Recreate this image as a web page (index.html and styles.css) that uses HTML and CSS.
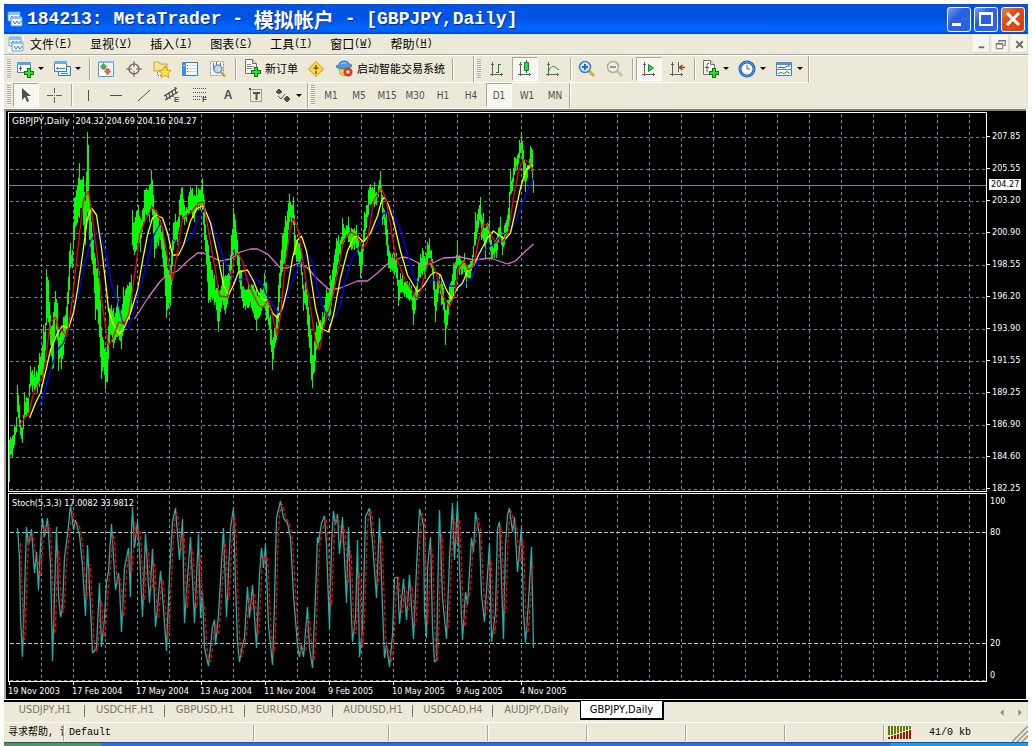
FILE: index.html
```html
<!DOCTYPE html>
<html lang="zh-CN">
<head>
<meta charset="utf-8">
<title>184213: MetaTrader</title>
<link rel="stylesheet" href="styles.css">
</head>
<body>
<svg class="defs" aria-hidden="true">
  <defs>
    <symbol id="plus" viewBox="0 0 10 10"><path d="M3 0h4v3h3v4H7v3H3V7H0V3h3z" fill="#0a7a0a"/><path d="M4 1h2v3h3v2H6v3H4V6H1V4h3z" fill="#2ee02e"/></symbol>
    <symbol id="app" viewBox="0 0 16 16"><path d="M1 1h12v9H1z" fill="#fff" stroke="#5a9ae0"/><path d="M1 1h12v3H1z" fill="#8cc0f4"/><path d="M3 8l2-3 2 3 2-3" fill="none" stroke="#4a86d8"/><path d="M4 6h11v9H4z" fill="#fff" stroke="#5a9ae0"/><path d="M4 6h11v2H4z" fill="#8cc0f4"/><path d="M6 10l2 3 2-3 2 3 2-3" fill="none" stroke="#3a76d0"/></symbol>
    <symbol id="page" viewBox="0 0 12 15"><path d="M.5.5h7l4 4v10H.5z" fill="#fff" stroke="#707070"/><path d="M7.500.5v4h4" fill="#ddd" stroke="#707070"/></symbol>
    <symbol id="axes" viewBox="0 0 18 18"><path d="M4.500 2v14M2 14.500h13M3 4.500h3M13.500 13v3" stroke="#606060" fill="none"/></symbol>
  </defs>
</svg>
<div class="window">
  <header class="title">
    <svg class="logo"><use href="#app"/></svg>
    <h1>184213: MetaTrader - <span class="cjk">模拟帐户</span> - [GBPJPY,Daily]</h1>
    <div class="caption">
      <button aria-label="Minimize"><svg viewBox="0 0 22 22"><path d="M4 15h9v3H4z" fill="#fff"/></svg></button>
      <button aria-label="Maximize"><svg viewBox="0 0 22 22"><path d="M5 5h12v12H5zM4 6h14" fill="none" stroke="#fff" stroke-width="2"/></svg></button>
      <button class="close" aria-label="Close"><svg viewBox="0 0 22 22"><path d="M5 5l12 12M17 5L5 17" stroke="#fff" stroke-width="3"/></svg></button>
    </div>
  </header>

  <nav class="menu">
    <svg class="logo"><use href="#app"/></svg>
    <button>文件<span>(<u>F</u>)</span></button><button>显视<span>(<u>V</u>)</span></button><button>插入<span>(<u>I</u>)</span></button><button>图表<span>(<u>C</u>)</span></button><button>工具<span>(<u>T</u>)</span></button><button>窗口<span>(<u>W</u>)</span></button><button>帮助<span>(<u>H</u>)</span></button>
    <div class="mdi">
      <button aria-label="Minimize chart"><svg viewBox="0 0 16 16"><path d="M5 10h6v2H5z" fill="#6b6a60"/></svg></button>
      <button aria-label="Restore chart"><svg viewBox="0 0 16 16"><path d="M6 6V4h7v5h-2M3.500 7.500h7v5h-7zM3 7h8M6 4h8" fill="none" stroke="#6b6a60"/></svg></button>
      <button aria-label="Close chart"><svg viewBox="0 0 16 16"><path d="M4.500 4.500l7 7M11.500 4.500l-7 7" stroke="#6b6a60" stroke-width="2"/></svg></button>
    </div>
  </nav>

  <div class="bars">
    <div class="bar">
      <div class="band">
        <i class="grip"></i>
        <button class="drop" aria-label="New chart"><svg viewBox="0 0 18 18"><path d="M1.500 2.500h13v10h-13z" fill="#fff" stroke="#3d86c8"/><path d="M1 2h14v3H1z" fill="#5aa4e0"/><path d="M4.500 6v5M3 8.500h3" stroke="#555"/><use href="#plus" x="8" y="8" width="10" height="10"/></svg></button>
        <button class="drop" aria-label="Profiles"><svg viewBox="0 0 18 18"><path d="M5.500 6.500h12v9h-12z" fill="#e8f2fb" stroke="#3d7ab8"/><path d="M1.500 1.500h12v10h-12z" fill="#fff" stroke="#3d7ab8"/><path d="M1 1h13v3H1z" fill="#6aaee6"/><path d="M3 8.500h9M4.500 7v3M8 13.500h7" stroke="#4a8ac4"/></svg></button>
        <i class="sep"></i>
        <button aria-label="Market Watch"><svg viewBox="0 0 18 18"><path d="M1.500 1.500h15v15h-15z" fill="#fff" stroke="#4f9be0"/><path d="M1 1h16v2H1z" fill="#7cc0f0"/><path d="M9 6h6M9 9h6M9 12h6M9 15h6" stroke="#d5d5d5"/><path d="M6.500 3.500l3 3.500H8v2H5V7H3.500z" fill="#3fc03f" stroke="#158015" stroke-width=".7"/><path d="M10.500 14.500l-3-3.500H9V9h3v2h1.500z" fill="#f07040" stroke="#b03010" stroke-width=".7"/></svg></button>
        <button aria-label="Data Window"><svg viewBox="0 0 18 18"><circle cx="9" cy="9" r="5" fill="none" stroke="#707070" stroke-width="1.500"/><path d="M9 1v6M9 11v6M1 9h6M11 9h6" stroke="#606060"/></svg></button>
        <button aria-label="Navigator"><svg viewBox="0 0 18 18"><path d="M1 2h5l1 2h7v7H1z" fill="#fbe48a" stroke="#c9a03a"/><path d="M4.500 12v4M5 15.500h3" stroke="#777" stroke-dasharray="1 1"/><path d="M12 6l2 4 4 .5-3 3 .7 4L12 15.500 8.300 17.500 9 13.500l-3-3 4-.5z" fill="#ffe83a" stroke="#c08a10" stroke-width=".8"/></svg></button>
        <button aria-label="Terminal"><svg viewBox="0 0 18 18"><path d="M1.500 2.500h15v13h-15z" fill="#fff" stroke="#2f7fd0"/><path d="M1 2h4v14H1z" fill="#3f8fe0"/><path d="M6 5.500h1M6 8.500h1M6 11.500h1" stroke="#e02020"/><path d="M8 5.500h8M8 8.500h8M8 11.500h8" stroke="#c6d8ee"/><path d="M2 5.500h2" stroke="#fff"/></svg></button>
        <button aria-label="Strategy Tester"><svg viewBox="0 0 18 18"><path d="M1.500 1.500h13v14h-13z" fill="#f4f4ee" stroke="#999" stroke-dasharray="2 1"/><path d="M4.500 3v7M7.500 2v5M11.500 3v4" stroke="#4a78b0"/><circle cx="9" cy="9" r="4" fill="#bcdcf8" stroke="#6a96c4" stroke-width="1.500"/><path d="M12 12l4 4.500" stroke="#d0a030" stroke-width="2.500"/></svg></button>
        <i class="sep"></i>
        <button class="text"><svg viewBox="0 0 18 18"><use href="#page" x="2" y="0" width="12" height="15"/><path d="M4 5.500h4M4 7.500h7M4 9.500h5" stroke="#888"/><use href="#plus" x="8" y="8" width="10" height="10"/></svg>新订单</button>
        <button aria-label="MetaEditor"><svg viewBox="0 0 18 18"><path d="M9 1.500L16.500 9 9 16.500 1.500 9z" fill="#ffd84a" stroke="#c09020"/><path d="M9 5v5M6.500 8h5M9 11v3" stroke="#7a5a10" stroke-width="1.500"/></svg></button>
        <button class="text"><svg viewBox="0 0 18 18"><path d="M4 8h10l-1 6-4 3-4-2z" fill="#f2cc54" stroke="#b89030" stroke-width=".8"/><path d="M1 8q0-2 3-2 0-4 5-4t5 3q3 0 3 2-3 3-8 3T1 8z" fill="#4a9ce0" stroke="#2a6cab" stroke-width=".8"/><path d="M6 5q2-2 5-1" stroke="#b8dcf8" fill="none"/><circle cx="13" cy="13" r="4.500" fill="#d83820"/><path d="M11.500 11.500h3v3h-3z" fill="#fff"/></svg>启动智能交易系统</button>
        <i class="sep"></i>
      </div>
      <div class="band">
        <i class="grip"></i>
        <button aria-label="Bar chart"><svg viewBox="0 0 18 18"><use href="#axes"/><path d="M10.500 4v9M10 4.500h3M8 12.500h2" stroke="#0a8a30"/></svg></button>
        <button class="on" aria-label="Candlesticks"><svg viewBox="0 0 18 18"><use href="#axes"/><path d="M10.500 0v13" stroke="#0a8a30"/><path d="M8.500 2.500h4v8h-4z" fill="#2ed84a" stroke="#0a8a30"/></svg></button>
        <button aria-label="Line chart"><svg viewBox="0 0 18 18"><use href="#axes"/><path d="M4 12q4-8 7-5l4 3" stroke="#1a9a40" fill="none"/></svg></button>
        <i class="sep"></i>
        <button aria-label="Zoom in"><svg viewBox="0 0 18 18"><path d="M11 11l5 5" stroke="#d8aa30" stroke-width="3"/><circle cx="7" cy="7" r="5.500" fill="#cfe8fb" stroke="#3a84c8" stroke-width="1.500"/><path d="M7 4v6M4 7h6" stroke="#2a70b0" stroke-width="2"/></svg></button>
        <button aria-label="Zoom out"><svg viewBox="0 0 18 18"><path d="M11 11l5 5" stroke="#c4c1b4" stroke-width="3"/><circle cx="7" cy="7" r="5.500" fill="#f0efe8" stroke="#aeaba0" stroke-width="1.500"/><path d="M4 7h6" stroke="#9a988e" stroke-width="2"/></svg></button>
        <i class="sep"></i>
        <button class="on" aria-label="Auto scroll"><svg viewBox="0 0 18 18"><use href="#axes"/><path d="M8.500 4.500l5 3.500-5 3.500z" fill="#2ed84a" stroke="#0a8a30"/></svg></button>
        <button aria-label="Chart shift"><svg viewBox="0 0 18 18"><use href="#axes"/><path d="M10.500 2v10" stroke="#2a78a8"/><path d="M11 7.500h6M14.500 5l-3 2.500 3 2.500" stroke="#b03a10" fill="none" stroke-width="1.500"/></svg></button>
        <i class="sep"></i>
        <button class="drop" aria-label="Indicators"><svg viewBox="0 0 18 18"><use href="#page" x="2" y="0" width="12" height="15"/><path d="M8 3.500q-2-1-2 2v7M4 7.500h4" stroke="#555" fill="none"/><use href="#plus" x="8" y="8" width="10" height="10"/></svg></button>
        <button class="drop" aria-label="Periods"><svg viewBox="0 0 18 18"><circle cx="9" cy="9" r="7" fill="#fff" stroke="#1f5fb0" stroke-width="3"/><circle cx="9" cy="9" r="7" fill="none" stroke="#5aa8f0"/><path d="M9 5v4h3" stroke="#555" fill="none"/></svg></button>
        <button class="drop" aria-label="Templates"><svg viewBox="0 0 18 18"><path d="M1.500 2.500h15v13h-15z" fill="#fff" stroke="#3a80c8"/><path d="M1 2h16v3H1zM1 9h16v1H1z" fill="#4a94dc"/><path d="M3 8l3-1 3 1 3-2h3" stroke="#a03018" fill="none"/><path d="M3 13.500l3-1 3 1 3-2 3 2" stroke="#2a9a30" fill="none"/></svg></button>
      </div>
    </div>
    <div class="bar">
      <div class="band">
        <i class="grip"></i>
        <button class="on" aria-label="Cursor"><svg viewBox="0 0 18 18"><path d="M5 2v12l3-3 2 5 2-1-2-5h4z" fill="#505050"/></svg></button>
        <button aria-label="Crosshair"><svg viewBox="0 0 18 18"><path d="M9.500 2v5M9.500 11v6M2 9.500h6M11 9.500h6M9 9.500h1" stroke="#606060"/></svg></button>
        <i class="sep"></i>
        <button aria-label="Vertical line"><svg viewBox="0 0 18 18"><path d="M9.500 4v11" stroke="#505050"/></svg></button>
        <button aria-label="Horizontal line"><svg viewBox="0 0 18 18"><path d="M3 9.500h12" stroke="#505050"/></svg></button>
        <button aria-label="Trendline"><svg viewBox="0 0 18 18"><path d="M3 15L15 4" stroke="#505050"/></svg></button>
        <button aria-label="Equidistant channel"><svg viewBox="0 0 18 18"><path d="M1 10L14 2M2 14l13-8M3 8l1 6M6 6l1 7M9 4l1 7M12 1l1 7" stroke="#505050" stroke-width="1.300"/><text x="11" y="16" class="glyph">E</text></svg></button>
        <button aria-label="Fibonacci"><svg viewBox="0 0 18 18"><path d="M2 2.500h13M2 6.500h13M2 10.500h13M2 13.500h8" stroke="#505050" stroke-dasharray="1 1"/><text x="11" y="16" class="glyph">F</text></svg></button>
        <button class="letter">A</button>
        <button aria-label="Text label"><svg viewBox="0 0 18 18"><path d="M3.500 3.500h11v12h-11z" fill="none" stroke="#505050" stroke-dasharray="1 1"/><path d="M2 2h2v2H2zM6 6h7v2H6zM8.500 8h2v6h-2z" fill="#505050"/></svg></button>
        <button class="drop" aria-label="Arrows"><svg viewBox="0 0 18 18"><path d="M5 3l3 3-3 2-3-2zM13 10l3 3-3 3-3-3z" fill="#505050" stroke="#505050"/><path d="M4 10l3 3 4-5" fill="none" stroke="#505050"/></svg></button>
      </div>
      <div class="band">
        <i class="grip"></i>
        <button>M1</button><button>M5</button><button>M15</button><button>M30</button><button>H1</button><button>H4</button><button class="on">D1</button><button>W1</button><button>MN</button>
      </div>
    </div>
  </div>

  <main class="chart">
    <section class="panel main">
      <div class="plot">
        <svg class="canvas" id="price"></svg>
        <p class="legend"><span>GBPJPY,Daily</span>204.32 204.69 204.16 204.27</p>
      </div>
      <div class="scale">
        <span>207.85</span><span>205.55</span><span>203.20</span><span>200.90</span><span>198.55</span><span>196.20</span><span>193.90</span><span>191.55</span><span>189.25</span><span>186.90</span><span>184.60</span><span>182.25</span>
        <b class="quote">204.27</b>
      </div>
    </section>
    <section class="panel stoch">
      <div class="plot">
        <svg class="canvas" id="stoch"></svg>
        <p class="legend">Stoch(5,3,3) 17.0082 33.9812</p>
      </div>
      <div class="levels"><span>100</span><span>80</span><span>20</span><span>0</span></div>
    </section>
    <div class="dates"><span>19 Nov 2003</span><span>17 Feb 2004</span><span>17 May 2004</span><span>13 Aug 2004</span><span>11 Nov 2004</span><span>9 Feb 2005</span><span>10 May 2005</span><span>9 Aug 2005</span><span>4 Nov 2005</span></div>
  </main>

  <nav class="tabs">
    <button>USDJPY,H1</button><button>USDCHF,H1</button><button>GBPUSD,H1</button><button class="wide">EURUSD,M30</button><button>AUDUSD,H1</button><button>USDCAD,H4</button><button class="wide last">AUDJPY,Daily</button><button class="active">GBPJPY,Daily</button>
    <div class="arrows">
      <button aria-label="Scroll left"><svg viewBox="0 0 8 8"><path d="M5 1v6L2 4z" fill="#8c8a80"/></svg></button>
      <button aria-label="Scroll right"><svg viewBox="0 0 8 8"><path d="M3 1v6l3-3z" fill="#8c8a80"/></svg></button>
    </div>
  </nav>

  <footer class="status">
    <span class="help">寻求帮助, 请</span>
    <span class="profile">Default</span>
    <span class="first"></span><span></span><span></span><span></span><span></span><span></span>
    <span class="traffic">
      <svg viewBox="0 0 24 13"><path d="M1 0v9M4 0v9M7 0v8M10 0v7M13 0v6M16 0v5M19 0v4M22 0v3" stroke="#5c8000" stroke-width="2"/><path d="M1 11v2M4 10v3M7 9v4M10 8v5M13 7v6M16 6v7M19 5v8M22 4v9" stroke="#9c1800" stroke-width="2"/></svg>
      41/0 kb
    </span>
    <svg class="sizer" viewBox="0 0 16 16"><path d="M0 16L16 0M5 16L16 5M10 16l6-6" stroke="#aca899" stroke-width="2"/><path d="M2 16L16 2M7 16L16 7M12 16l4-4" stroke="#fff"/></svg>
  </footer>
  <div class="taskbar"><i class="start"></i><i class="tray"></i></div>
</div>
<script src="chart.js"></script>
</body>
</html>
```
FILE: styles.css
```css
* { box-sizing: border-box; }
body { margin: 0; background: #fff; font-family: "DejaVu Sans Condensed", "DejaVu Sans", "Noto Sans CJK SC", sans-serif; font-size: 9px; color: #000; }
button { margin: 0; padding: 0; border: 0; background: none; font: inherit; color: inherit; }
p, h1 { margin: 0; }
.defs { position: absolute; width: 0; height: 0; }

.window { display: flex; flex-direction: column; height: 100vh; padding: 4px 4px 0; }

.title { display: flex; align-items: center; flex: none; height: 30px; padding: 0 3px; gap: 4px; background: linear-gradient(#0a50d8, #0054e4 15%, #0054e4 50%, #0066ff 80%, #0062f4 92%, #003cc8); }
.title .logo { width: 16px; height: 16px; }
.title h1 { display: flex; flex: 1; font: bold 18px/28px "Liberation Mono", monospace; color: #fff; text-shadow: 1px 1px #0a2a80; white-space: pre; }
.title .cjk { font: bold 20px/29px "Noto Sans CJK SC", sans-serif; }
.caption { display: flex; gap: 3px; }
.caption button { width: 24px; height: 25px; border: 1px solid #fff; border-radius: 3px; background: linear-gradient(135deg, #7a9cf0, #2a5ee0 40%, #2a66f0); }
.caption .close { background: linear-gradient(135deg, #d8863c, #dc4c18 40%, #d84010); }
.caption svg { display: block; width: 22px; height: 22px; }

.menu { display: flex; align-items: center; flex: none; height: 20px; padding-left: 4px; background: #ece9d8; font: 12px/18px "Noto Sans CJK SC", sans-serif; }
.menu .logo { width: 16px; height: 16px; margin-right: 6px; background: #fff; }
.menu > button { display: flex; margin-right: 18px; white-space: nowrap; }
.menu > button span { font: 10px/18px "Liberation Mono", monospace; }
.mdi { display: flex; gap: 2px; margin-left: auto; }
.mdi button { width: 17px; height: 18px; background: #f6f5ee; border: 1px solid #fbfaf6; border-right-color: #dcd9c8; border-bottom-color: #dcd9c8; }
.mdi svg { display: block; width: 15px; height: 15px; }

.bars { flex: none; background: #ece9d8; border-top: 1px solid #aca899; box-shadow: inset 0 1px #fff; padding-top: 1px; }
.bar { display: flex; }
.band { display: flex; align-items: center; height: 27px; padding: 0 0 1px 2px; border-right: 1px solid #aca899; border-bottom: 1px solid #fff; box-shadow: 1px 0 #fff; }
.bar:first-child .band:first-child { padding-right: 18px; }
.bar:last-child .band { height: 26px; }
.grip { width: 4px; height: 20px; margin: 0 2px 0 1px; background: repeating-linear-gradient(#aca899 0 1px, #f8f7f0 1px 2px); }
.band:first-child .grip { margin-right: 1px; }
.sep { width: 6px; height: 22px; background: linear-gradient(90deg, transparent 3px, #aca899 3px 4px, #fff 4px 5px, transparent 5px); }
.band button { display: flex; align-items: center; justify-content: center; width: 28px; height: 24px; font-size: 10px; color: #505050; }
.band svg { flex: none; width: 18px; height: 18px; }
.band .on { background: #f7f6f0; border: 1px solid #aca899; border-right-color: #fff; border-bottom-color: #fff; width: 26px; margin: 0 1px; }
.band .drop { width: 37px; justify-content: flex-start; padding-left: 4px; gap: 4px; }
.band .drop::after { content: ""; border: 3px solid transparent; border-top-color: #000; border-bottom: 0; }
.band .text { width: auto; padding: 0 4px 2px 5px; gap: 4px; font: 11px/18px "Noto Sans CJK SC", sans-serif; color: #000; white-space: nowrap; }
.band .letter { font: bold 12px/18px "Liberation Sans", sans-serif; }
.glyph { font: bold 8px "Liberation Sans", sans-serif; fill: #505050; }

.chart { display: flex; flex-direction: column; flex: 1; min-height: 0; margin-right: 2px; padding: 1px 0 0 2px; background: #000; border-top: 2px solid #848274; border-left: 2px solid #aca899; color: #fff; }
.panel { display: flex; min-height: 0; }
.main { flex: 1; }
.stoch { flex: none; height: 189px; margin-top: 1px; }
.plot { position: relative; flex: 1; border: 1px solid #fff; overflow: hidden; }
.canvas { display: block; width: 100%; height: 100%; }
.legend { position: absolute; top: 2px; left: 1px; padding: 0 2px; line-height: 12px; white-space: nowrap; }
.legend span { margin-right: 6px; font-family: "DejaVu Sans", sans-serif; }
.stoch .legend { top: 3px; }
.scale { position: relative; width: 39px; padding-top: 8px; }
.scale span { display: flex; align-items: center; gap: 2px; height: 32px; }
.scale span::before { content: ""; width: 3px; height: 1px; background: #fff; }
.quote { position: absolute; top: 67px; left: 2px; padding: 0 2px; background: #fff; color: #000; font-weight: normal; line-height: 11px; }
.levels { display: grid; grid-template-rows: 16px 15fr 16px 95fr 16px 18fr 12px; width: 39px; padding: 0 0 1px 3px; line-height: 16px; }
.levels span:nth-child(2) { grid-row: 3; }
.levels span:nth-child(3) { grid-row: 5; }
.levels span:nth-child(4) { grid-row: 7; line-height: 12px; }
.dates { display: flex; height: 17px; }
.dates span { width: 64px; white-space: nowrap; line-height: 12px; }
.dates span::before { content: ""; display: block; width: 1px; height: 3px; margin-left: 1px; background: #fff; }

.tabs { display: flex; flex: none; height: 22px; margin-top: 1px; padding-left: 1px; background: #ece9d8; border-top: 2px solid #000; font-size: 11px; line-height: 14px; color: #77756a; }
.tabs > button { width: 80px; height: 17px; padding-bottom: 1px; background: linear-gradient(#77756a, #77756a) right 3px / 1px 12px no-repeat; }
.tabs > .wide { width: 88px; }
.tabs > .last { background: none; width: 87px; }
.tabs > .active { width: 84px; height: 19px; margin-top: -1px; padding-bottom: 0; background: #fff; color: #000; border: 1px solid #000; border-top: 0; border-right-width: 2px; border-bottom-width: 2px; }
.arrows { display: flex; gap: 8px; margin-left: auto; padding-right: 4px; align-items: center; }
.arrows button { width: 9px; height: 9px; }
.arrows svg { display: block; width: 9px; height: 9px; }

.status { display: flex; align-items: center; flex: none; height: 20px; background: #ece9d8; border-top: 1px solid #fff; font: 10px/16px "Liberation Mono", "Noto Sans CJK SC", monospace; }
.status > span { width: 99px; height: 16px; border-left: 1px solid #aca899; box-shadow: inset 1px 0 #fff; overflow: hidden; white-space: nowrap; }
.status .help { width: 59px; padding-left: 4px; border: 0; box-shadow: none; }
.status .profile { width: 190px; padding-left: 5px; }
.status .first { width: 135px; }
.status .traffic { display: flex; align-items: center; flex: 1; gap: 17px; padding-left: 4px; }
.traffic svg { width: 24px; height: 13px; }
.sizer { width: 16px; height: 16px; align-self: flex-end; }

.taskbar { display: flex; flex: none; height: 4px; background: #2a70dc; border-top: 1px solid #1c50b0; justify-content: space-between; }
.start { width: 97px; background: #4a9a4a; }
.tray { width: 138px; background: #12a0ec; }

.grid { stroke: #778899; fill: none; stroke-dasharray: 3 3; shape-rendering: crispEdges; }
.level { stroke: #c0c0c0; stroke-dasharray: 4 2; }
.bid { stroke: #778899; }
.candles { stroke: #00ff00; fill: none; shape-rendering: crispEdges; }
.fast, .mid, .slow, .long, .k, .d { fill: none; stroke-width: 1.3; stroke-linejoin: bevel; }
.fast { stroke: #ff0000; }
.mid { stroke: #ffff00; }
.slow { stroke: #0000ff; }
.long { stroke: #da70d6; }
.k { stroke: #20b2aa; }
.d { stroke: #ff0000; stroke-dasharray: 4 2; }
```
FILE: chart.js
```js
const NS = "http://www.w3.org/2000/svg";
const nums = (s) => s.trim().split(/\s+/).map((t) => t.split(",").map(Number));

/* x, high, low */
const bars = nums(`9,440,482 10,437,455 12,436,457 14,425,445 16,417,432 17,385,412 19,405,427 20,420,435 22,428,443 24,392,417 26,397,417 28,398,415
30,366,387 32,370,392 34,367,390 37,373,393 39,353,387 41,353,375 43,325,377 45,323,350 46,269,325 48,280,322 50,315,345 52,325,369 53,312,368 55,291,320
57,303,340 58,330,371 60,333,357 61,330,369 63,317,355 65,315,340 67,292,330 69,251,290 70,243,268 72,250,268 74,198,240 76,190,225 79,163,218 81,180,208
83,176,225 85,201,245 87,132,212 88,145,220 89,200,240 91,222,260 93,240,275 95,258,320 97,268,310 99,271,337 101,327,379 103,340,367 105,347,389 107,343,382
109,308,345 111,305,335 113,308,348 115,313,340 117,285,337 119,310,340 121,310,349 123,287,332 125,290,322 127,285,320 129,282,320 131,275,310 132,210,245
134,222,255 136,211,250 138,205,240 140,218,252 142,210,232 144,190,222 146,188,215 149,185,222 151,170,205 152,180,215 154,210,258 156,210,248 158,215,246
160,220,240 162,228,258 164,240,278 166,255,318 168,270,308 170,265,306 171,255,285 173,223,250 175,214,241 177,220,245 179,200,227 181,188,215 182,187,220
184,205,225 186,207,222 188,196,215 190,187,210 192,188,217 194,195,222 196,185,210 198,188,210 200,190,210 202,178,210 204,200,240 206,235,265 208,245,303
210,262,302 212,270,300 214,275,305 216,288,310 218,285,332 220,290,312 223,262,305 225,275,314 227,275,304 229,265,295 231,235,270 233,208,250 235,220,258
237,240,266 239,255,282 241,272,298 243,286,308 245,290,310 248,282,308 251,284,308 253,285,313 256,290,331 258,292,318 260,288,315 262,290,308 264,273,308
266,283,320 268,305,325 270,315,345 272,340,370 274,328,348 276,315,340 278,285,322 280,260,288 282,235,272 285,216,262 287,211,245 289,194,222 291,205,222
293,197,225 294,215,255 296,240,262 299,243,265 301,248,275 303,285,311 305,282,305 307,295,325 309,315,348 311,335,380 312,355,388 314,341,372 316,322,350
318,325,348 320,320,340 322,312,332 324,305,325 326,287,315 328,293,320 330,275,315 332,270,298 334,255,285 336,238,275 338,235,262 340,240,255 342,218,245
344,228,242 346,225,235 348,217,242 351,228,250 354,228,250 356,225,248 358,235,255 360,252,278 362,242,265 364,212,242 366,205,228 368,190,215 370,184,205
372,187,202 374,182,207 376,192,205 378,186,197 380,171,192 382,195,225 384,210,225 386,212,245 388,245,268 390,253,272 392,254,271 394,253,275 396,253,278
398,280,306 400,273,293 402,275,292 404,282,297 407,281,298 409,282,301 411,285,300 413,295,325 415,290,310 417,278,300 418,262,282 420,254,278 422,248,275
425,258,278 427,242,265 429,238,258 431,250,268 433,268,290 435,290,322 437,280,302 439,274,288 441,278,305 443,288,310 445,310,345 447,300,325 449,285,305
451,281,301 453,263,295 454,265,288 457,241,265 459,255,275 461,261,275 464,253,272 466,265,288 468,265,278 470,261,278 472,255,266 475,212,245 477,214,232
480,197,222 481,215,240 483,213,241 485,228,258 487,223,238 489,220,242 491,240,260 494,241,258 496,238,258 498,228,242 500,217,238 502,235,255 504,225,245
507,215,235 509,192,222 510,169,195 512,178,191 514,157,175 517,155,170 519,140,158 521,132,150 523,150,175 525,163,192 527,165,178 530,146,168 532,150,180 533,180,193`);

const lines = {
  long: nums(`134,319 148,297 160,281 167,275 177,271 187,261 197,253 203,253 213,258 220,261 230,259 240,252 250,249 257,249 267,254 280,268 287,268 298,263
307,268 317,279 329,290 340,288 357,281 367,281 377,273 387,264 402,257 408,258 420,264 430,264 443,258 460,257 473,260 490,258 507,264 515,261 523,253 533,244`),
  slow: nums(`39,406 45,388 50,370 57,350 63,343 68,328 73,310 79,290 83,268 90,241 97,231 101,236 106,258 112,288 117,300 122,322 128,327 133,312 139,290 147,261
153,236 160,223 165,230 170,238 177,243 185,242 192,235 198,218 203,210 208,215 215,235 223,258 230,275 235,280 247,279 257,280 263,286 265,293 272,305 278,313
285,301 292,280 298,268 302,258 307,254 312,263 318,293 325,313 330,320 335,316 340,305 345,278 352,258 360,245 368,236 377,225 383,213 393,214 398,225 403,241
410,265 415,281 423,284 432,280 442,280 450,286 462,286 472,278 477,261 483,251 493,244 500,236 510,231 515,221 523,201 528,188 533,178`),
  mid: nums(`29,418 35,403 40,393 45,372 50,350 57,333 62,326 68,328 73,313 77,290 82,255 87,218 91,208 96,215 101,248 106,290 108,310 113,325 119,334 124,327
130,313 137,290 142,261 147,235 152,218 156,215 162,218 167,233 172,255 178,255 183,245 190,221 197,208 203,206 210,223 217,255 223,285 228,295 233,285 238,272
247,270 253,281 257,291 263,300 267,300 272,313 277,318 282,308 287,288 292,258 297,240 301,236 306,251 310,275 315,308 320,328 328,332 333,315 340,278 347,251
353,238 357,236 363,242 370,233 377,216 381,201 384,197 388,205 393,221 400,251 407,275 417,292 423,286 430,275 435,272 440,275 445,288 451,299 457,288 462,283
467,271 473,266 478,255 487,238 493,231 498,235 505,239 510,233 515,211 520,188 525,171 530,165 533,166`),
  fast: nums(`19,425 25,417 28,415 33,393 42,377 45,360 50,322 55,317 58,328 63,332 66,337 69,320 73,290 77,251 83,200 88,191 92,218 97,258 101,298 105,327 108,346
113,337 118,322 123,324 128,315 132,290 135,270 139,235 145,220 152,207 157,213 162,228 167,258 172,281 177,251 182,218 190,213 198,203 203,202 208,231 215,271
219,296 227,297 230,285 233,261 237,253 242,261 247,281 253,295 258,305 263,308 267,300 270,308 277,336 280,315 285,261 290,228 293,218 298,231 303,265 310,308
315,341 319,350 323,328 332,298 338,268 343,241 350,232 357,236 362,249 367,241 373,201 381,188 386,201 391,231 395,255 405,281 412,291 416,299 420,291 427,265
430,260 435,271 442,295 449,307 454,295 458,268 464,261 468,270 473,266 478,241 483,224 487,225 492,238 497,243 503,241 508,231 513,198 518,171 523,159 528,162 533,172`)
};

const kLine = nums(`17,528 19,558 20,618 22,657 24,595 26,527 28,545 31,529 34,573 36,552 38,590 40,545 42,518 44,537 47,518 50,565 52,661 54,595 56,527 58,595 60,617
62,608 64,558 67,535 70,505 73,530 75,520 79,535 82,565 85,616 87,545 90,608 92,653 96,648 99,583 101,647 104,618 106,582 108,572 111,524 115,590 118,573 119,585
121,632 124,568 128,548 130,597 131,532 132,507 134,548 137,521 139,552 142,617 145,534 149,603 152,549 155,627 157,608 160,571 162,595 166,651 169,575 172,522
175,508 179,560 182,519 184,623 187,578 190,537 194,623 198,534 200,618 202,593 204,648 208,666 212,627 214,620 215,645 218,615 223,528 226,617 230,528 233,508
235,585 237,642 239,662 242,645 244,638 247,587 249,618 252,585 256,648 259,575 261,548 263,568 265,544 268,625 272,665 274,602 276,518 280,501 283,518 287,523
290,538 293,595 297,645 299,657 301,645 303,657 307,607 309,648 312,668 315,595 317,537 318,543 321,523 324,516 326,545 329,630 331,545 333,511 335,525 337,514
339,554 342,517 344,558 346,603 348,527 350,592 352,642 355,618 357,540 359,657 362,628 365,517 369,508 372,542 376,598 379,518 382,608 384,658 386,645 389,667
392,635 394,578 397,577 399,624 403,579 406,620 409,575 413,639 416,568 419,509 423,525 424,612 426,638 427,568 430,537 432,628 434,662 436,660 438,552 439,510
442,598 446,639 449,558 452,503 454,560 457,502 459,568 462,640 465,592 467,605 470,555 471,538 473,552 475,512 479,535 481,595 484,622 487,575 489,543 491,642
495,612 497,528 499,522 503,639 505,545 507,515 509,508 512,532 514,517 517,572 521,527 523,612 525,643 528,602 531,547 533,648`);

function at(points, x, col) {
  let i = 1;
  while (i < points.length - 1 && points[i][0] < x) i++;
  const [a, b] = [points[i - 1], points[i]];
  const t = Math.min(1, Math.max(0, (x - a[0]) / (b[0] - a[0])));
  return a[col] + (b[col] - a[col]) * t;
}

function add(parent, name, attrs) {
  const node = document.createElementNS(NS, name);
  for (const key in attrs) node.setAttribute(key, attrs[key]);
  parent.append(node);
  return node;
}

function setup(id, left, top, firstRow, rows) {
  const svg = document.getElementById(id);
  for (let x = 41; x < 2600; x += 32) add(svg, "line", { class: "grid", x1: x - left + 0.5, x2: x - left + 0.5, y1: 1, y2: "100%" });
  for (let r = 0; r < rows; r++) {
    const y = firstRow + r * 32 - top + 0.5;
    add(svg, "line", { class: "grid", x1: 1, x2: "100%", y1: y, y2: y });
  }
  return add(svg, "g", { transform: `translate(${-left} ${-top})` });
}

const poly = (g, cls, pts) => add(g, "polyline", { class: cls, points: pts.map((p) => `${p[0] + 0.5},${p[1]}`).join(" ") });

const price = setup("price", 9, 113, 137, 12);
add(price, "line", { class: "bid", x1: 9, x2: 2600, y1: 185.5, y2: 185.5 });
let path = "";
for (let x = 9; x <= 533; x++) {
  const exact = bars.some((b) => b[0] === x);
  const shift = exact ? 0 : (x * 37) % 9;
  path += `M${x + 0.5} ${Math.round(at(bars, x, 1)) + shift}V${Math.round(at(bars, x, 2)) - (exact ? 0 : (x * 53) % 7)}`;
}
add(price, "path", { class: "candles", d: path });
for (const cls of ["long", "slow", "mid", "fast"]) poly(price, cls, lines[cls]);

const stoch = setup("stoch", 9, 494, 680, 1);
for (const y of [532.5, 643.5]) add(stoch, "line", { class: "level", x1: 10, x2: 2600, y1: y, y2: y });
poly(stoch, "k", kLine);
const signal = [];
for (let x = 20; x <= 533; x++) signal.push([x, (at(kLine, x - 3, 1) + at(kLine, x - 2, 1) + at(kLine, x - 1, 1)) / 3]);
poly(stoch, "d", signal);
```
